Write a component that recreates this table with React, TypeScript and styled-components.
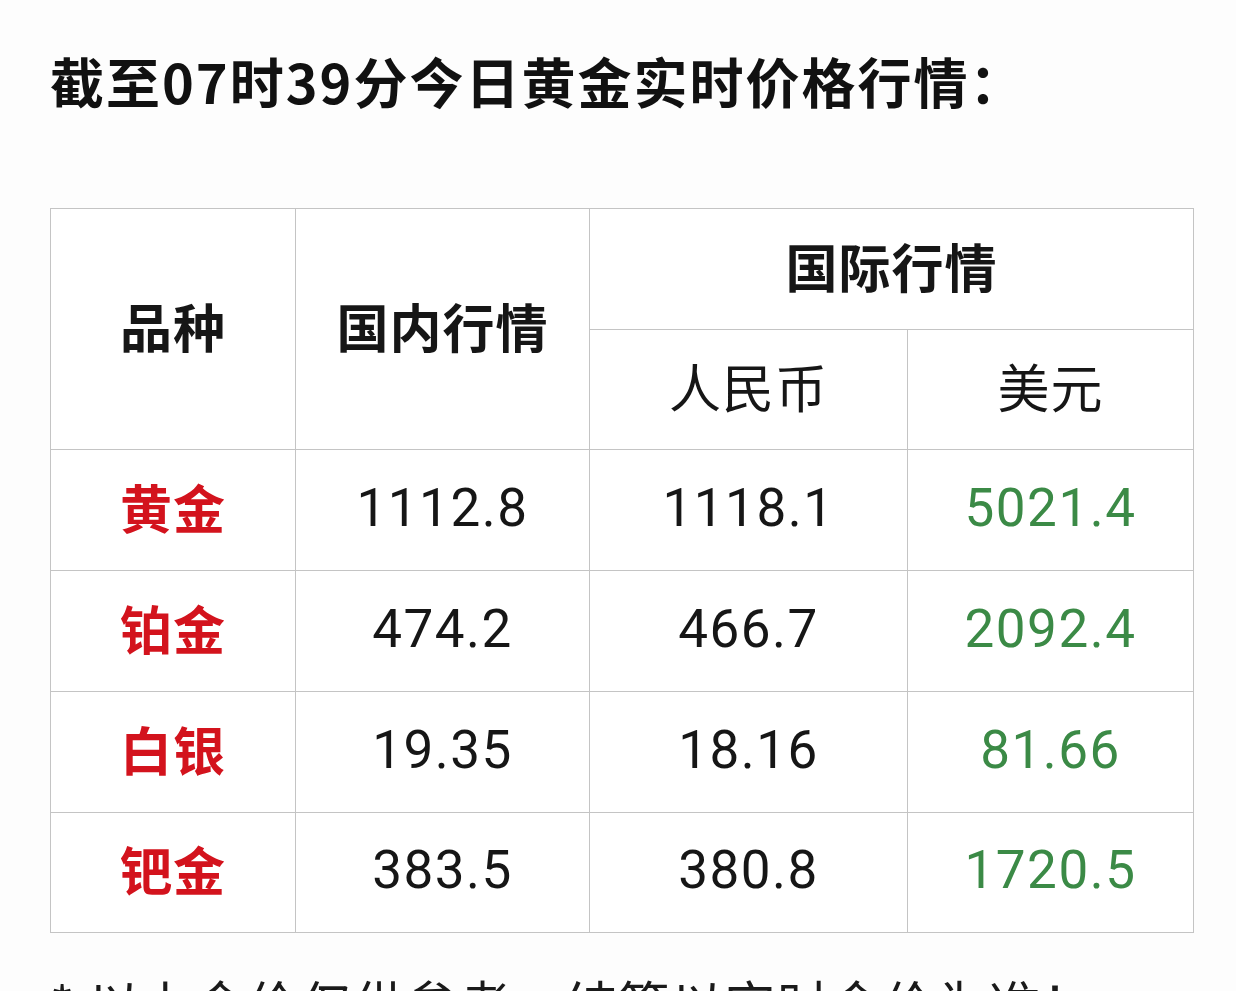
import React from 'react'
import styled, { createGlobalStyle } from 'styled-components'

const GlobalStyle = createGlobalStyle`
	html, body {
		margin: 0;
		padding: 0;
		background: #fdfdfd;
	}
	body {
		font-family: "Noto Sans CJK SC", "Noto Sans", sans-serif;
		color: #141414;
	}
`

const Page = styled.div`
	padding: 54px 43px 0 50px;
`

const Title = styled.h1`
	margin: 0;
	font-size: 54px;
	line-height: 54px;
	font-weight: 700;
	letter-spacing: 2px;
	color: #111;
	white-space: nowrap;
`

const Table = styled.table`
	margin-top: 100px;
	width: 1143px;
	table-layout: fixed;
	border-collapse: collapse;
	background: #fff;
`

const Cell = styled.td<{ $bold?: boolean; $tone?: 'red' | 'green' | 'dark'; $num?: boolean }>`
	border: 1px solid #c4c4c4;
	padding: 0 0 ${(p) => (p.$num ? '4px' : '7px')};
	text-align: center;
	vertical-align: middle;
	font-family: ${(p) => (p.$num ? 'Roboto, "Noto Sans", sans-serif' : '"Noto Sans CJK SC", sans-serif')};
	font-size: ${(p) => (p.$num ? '53px' : '52px')};
	line-height: 1;
	letter-spacing: ${(p) => (p.$num ? '1.5px' : '1px')};
	font-weight: ${(p) => (p.$bold ? 700 : 400)};
	color: ${(p) => (p.$tone === 'red' ? '#d3131d' : p.$tone === 'green' ? '#3b8a46' : '#161616')};
`

const Row = styled.tr<{ $h: number }>`
	height: ${(p) => p.$h}px;
`

const Note = styled.p`
	margin: 44px 0 0;
	font-size: 52px;
	line-height: 52px;
	letter-spacing: 1px;
	color: #1a1a1a;
	white-space: nowrap;
`

const rows = [
	{ name: '黄金', domestic: '1112.8', cny: '1118.1', usd: '5021.4' },
	{ name: '铂金', domestic: '474.2', cny: '466.7', usd: '2092.4' },
	{ name: '白银', domestic: '19.35', cny: '18.16', usd: '81.66' },
	{ name: '钯金', domestic: '383.5', cny: '380.8', usd: '1720.5' },
]

export default function App() {
	return (
		<>
			<GlobalStyle />
			<Page>
				<Title>截至07时39分今日黄金实时价格行情：</Title>
				<Table>
					<colgroup>
						<col style={{ width: 245 }} />
						<col style={{ width: 294 }} />
						<col style={{ width: 318 }} />
						<col style={{ width: 286 }} />
					</colgroup>
					<tbody>
						<Row $h={121}>
							<Cell as="th" rowSpan={2} $bold>品种</Cell>
							<Cell as="th" rowSpan={2} $bold>国内行情</Cell>
							<Cell as="th" colSpan={2} $bold>国际行情</Cell>
						</Row>
						<Row $h={120}>
							<Cell as="th">人民币</Cell>
							<Cell as="th">美元</Cell>
						</Row>
						{rows.map((r, i) => (
							<Row key={r.name} $h={i === rows.length - 1 ? 120 : 121}>
								<Cell $bold $tone="red">{r.name}</Cell>
								<Cell $num>{r.domestic}</Cell>
								<Cell $num>{r.cny}</Cell>
								<Cell $num $tone="green">{r.usd}</Cell>
							</Row>
						))}
					</tbody>
				</Table>
				<Note>* 以上金价仅供参考，结算以实时金价为准！</Note>
			</Page>
		</>
	)
}
